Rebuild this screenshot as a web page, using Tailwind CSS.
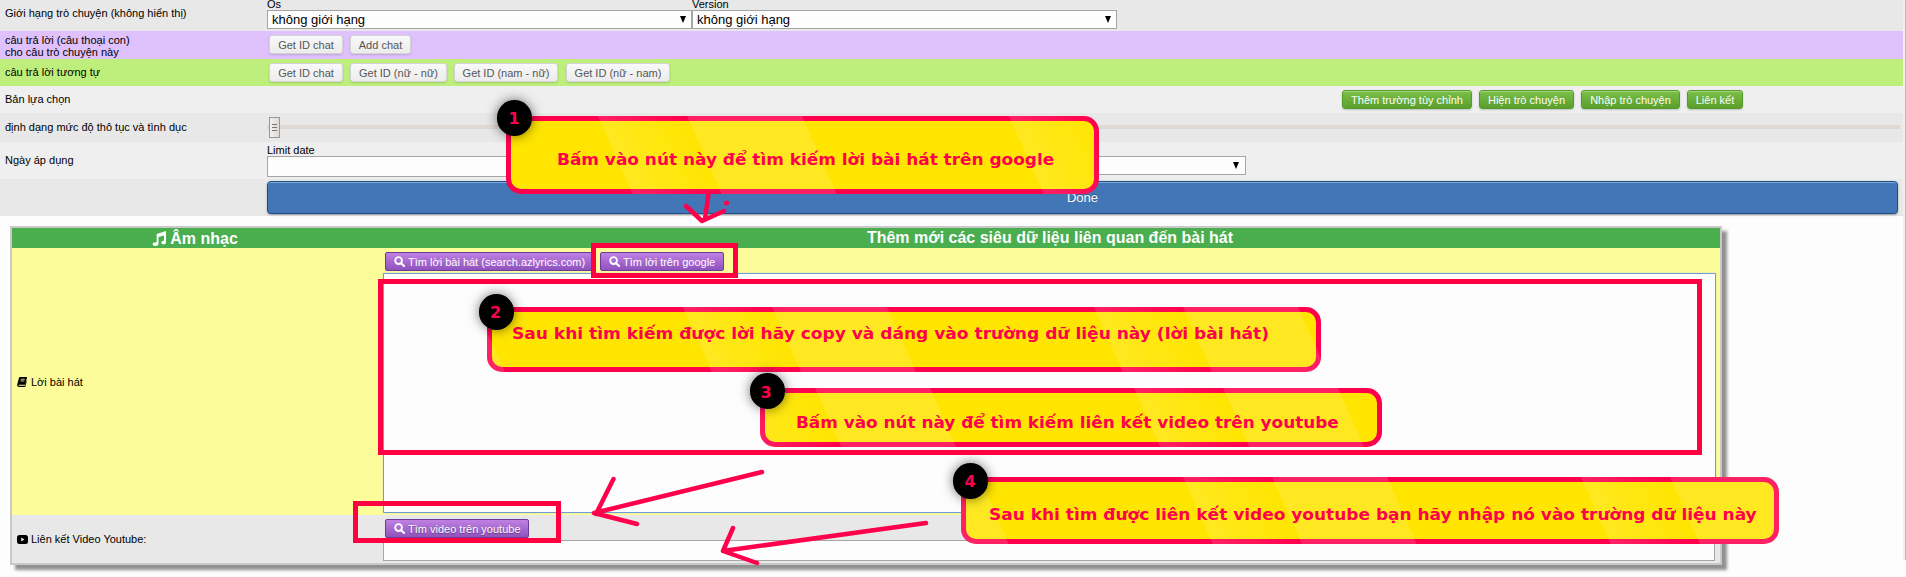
<!DOCTYPE html>
<html lang="vi">
<head>
<meta charset="utf-8">
<title>Âm nhạc</title>
<script src="https://cdn.jsdelivr.net/npm/@tailwindcss/browser@4"></script>
</head>
<body class="relative h-[577px] w-[1906px] overflow-hidden bg-[#fdfdfd] font-['Liberation_Sans',Arial,sans-serif] text-[11px] leading-[12px] text-black">
<svg class="absolute h-0 w-0">
  <defs>
    <symbol id="search" viewBox="0 0 12 12"><circle cx="5" cy="5" r="3.7" fill="none" stroke="currentColor" stroke-width="2"/><path d="M7.8 7.8 11 11" stroke="currentColor" stroke-width="2.3" stroke-linecap="round"/></symbol>
    <linearGradient id="fade"><stop offset="0" stop-color="#fff" stop-opacity=".13"/><stop offset="1" stop-color="#fff" stop-opacity="0"/></linearGradient>
    <g id="gloss"><g transform="skewX(24)"><rect x="0" width="89" height="90" fill="url(#fade)"/><rect x="89" width="115" height="90" fill="#fff" fill-opacity=".13"/></g></g>
  </defs>
</svg>

<main class="w-[1903px]">
  <div class="flex h-[31px] bg-[#e8e8e8]">
    <div class="w-[267px] pt-[7px] pl-[5px]">Giới hạng trò chuyện (không hiển thị)</div>
    <div class="w-[425px]">
      <div class="-mt-[2px] h-3">Os</div>
      <div class="flex h-[19px] items-center justify-between border border-[#a6a6a6] bg-[#fdfdfd] pr-[5px] pl-1 text-[13px] leading-[17px]"><span>không giới hạng</span><span class="h-0 w-0 border-x-[3.5px] border-t-[7px] border-x-transparent border-t-black"></span></div>
    </div>
    <div class="w-[425px]">
      <div class="-mt-[2px] h-3">Version</div>
      <div class="flex h-[19px] items-center justify-between border border-[#a6a6a6] bg-[#fdfdfd] pr-[5px] pl-1 text-[13px] leading-[17px]"><span>không giới hạng</span><span class="h-0 w-0 border-x-[3.5px] border-t-[7px] border-x-transparent border-t-black"></span></div>
    </div>
  </div>

  <div class="flex h-[28px] bg-[#dec1fd]">
    <div class="w-[269px] pt-[3px] pl-[5px]">câu trả lời (câu thoại con)<br>cho câu trò chuyện này</div>
    <div class="flex gap-[7px] pt-1 text-[#555]">
      <button class="h-[19px] w-[74px] rounded-[3px] border border-[#d4d4d4] bg-linear-to-b from-[#f9f9f9] to-[#ececec] shadow-[0_1px_2px_rgba(0,0,0,.15)]">Get ID chat</button>
      <button class="h-[19px] w-[61px] rounded-[3px] border border-[#d4d4d4] bg-linear-to-b from-[#f9f9f9] to-[#ececec] shadow-[0_1px_2px_rgba(0,0,0,.15)]">Add chat</button>
    </div>
  </div>

  <div class="flex h-[27px] bg-[#beef7c]">
    <div class="w-[269px] pt-[7px] pl-[5px]">câu trả lời tương tự</div>
    <div class="flex gap-[7px] pt-1 text-[#555]">
      <button class="h-[19px] w-[74px] rounded-[3px] border border-[#d4d4d4] bg-linear-to-b from-[#f9f9f9] to-[#ececec] shadow-[0_1px_2px_rgba(0,0,0,.15)]">Get ID chat</button>
      <button class="h-[19px] w-[97px] rounded-[3px] border border-[#d4d4d4] bg-linear-to-b from-[#f9f9f9] to-[#ececec] shadow-[0_1px_2px_rgba(0,0,0,.15)]">Get ID (nữ - nữ)</button>
      <button class="h-[19px] w-[104px] rounded-[3px] border border-[#d4d4d4] bg-linear-to-b from-[#f9f9f9] to-[#ececec] shadow-[0_1px_2px_rgba(0,0,0,.15)]">Get ID (nam - nữ)</button>
      <button class="ml-px h-[19px] w-[104px] rounded-[3px] border border-[#d4d4d4] bg-linear-to-b from-[#f9f9f9] to-[#ececec] shadow-[0_1px_2px_rgba(0,0,0,.15)]">Get ID (nữ - nam)</button>
    </div>
  </div>

  <div class="flex h-[27px] bg-[#efefef]">
    <div class="w-[1342px] pt-[7px] pl-[5px]">Bản lựa chọn</div>
    <div class="flex gap-[7px] pt-1 text-[#fdfdfd] [text-shadow:0_1px_1px_rgba(0,0,0,.3)]">
      <button class="h-[19px] w-[130px] rounded-[3px] border border-[#549b27] bg-linear-to-b from-[#7cc04b] to-[#5a9f2b] shadow-[inset_0_1px_0_#a2d67c,0_1px_2px_rgba(0,0,0,.2)]">Thêm trường tùy chỉnh</button>
      <button class="h-[19px] w-[95px] rounded-[3px] border border-[#549b27] bg-linear-to-b from-[#7cc04b] to-[#5a9f2b] shadow-[inset_0_1px_0_#a2d67c,0_1px_2px_rgba(0,0,0,.2)]">Hiện trò chuyện</button>
      <button class="h-[19px] w-[99px] rounded-[3px] border border-[#549b27] bg-linear-to-b from-[#7cc04b] to-[#5a9f2b] shadow-[inset_0_1px_0_#a2d67c,0_1px_2px_rgba(0,0,0,.2)]">Nhập trò chuyện</button>
      <button class="h-[19px] w-[56px] rounded-[3px] border border-[#549b27] bg-linear-to-b from-[#7cc04b] to-[#5a9f2b] shadow-[inset_0_1px_0_#a2d67c,0_1px_2px_rgba(0,0,0,.2)]">Liên kết</button>
    </div>
  </div>

  <div class="flex h-[29px] bg-[#e8e8e8]">
    <div class="w-[267px] pt-2 pl-[5px]">định dạng mức độ thô tục và tình dục</div>
    <div class="mt-3 h-1 w-[1633px] bg-[#dedad3]">
      <div class="-mt-2 ml-[2px] flex h-[21px] w-[11px] flex-col items-center justify-center gap-[2px] border border-[#9c9794] bg-linear-to-r from-[#f3f0ee] to-[#dcd8d6]">
        <i class="h-px w-[5px] bg-[#777]"></i><i class="h-px w-[5px] bg-[#777]"></i><i class="h-px w-[5px] bg-[#777]"></i>
      </div>
    </div>
  </div>

  <div class="flex h-[37px] bg-[#efefef]">
    <div class="w-[267px] pt-[12px] pl-[5px]">Ngày áp dụng</div>
    <div class="w-[489px] pt-[2px]">
      <div class="h-3">Limit date</div>
      <div class="h-[21px] border border-[#a6a6a6] bg-[#fdfdfd]"></div>
    </div>
    <div class="w-[490px] pt-[14px]">
      <div class="flex h-[19px] items-center justify-end border border-[#a6a6a6] bg-[#fdfdfd] pr-[6px]"><span class="h-0 w-0 border-x-[3.5px] border-t-[7px] border-x-transparent border-t-black"></span></div>
    </div>
  </div>

  <div class="h-[37px] bg-[#e8e8e8] pt-[2px] pl-[267px]">
    <button class="block h-[33px] w-[1631px] rounded-[4px] border border-[#1b4f8d] bg-[#4276b6] text-[13px] text-[#fdfdfd] shadow-[inset_0_1px_0_#82a8d6,0_1px_2px_rgba(0,0,0,.35)] [text-shadow:0_-1px_0_rgba(0,0,0,.3)]">Done</button>
  </div>

  <section class="mt-[10px] ml-[10px] h-[339px] w-[1712px] border-2 border-[#c9c9c9] bg-[#e8e8e8] shadow-[5px_5px_3px_#909090]">
    <div class="flex h-5 bg-[#4aad4e] text-center text-[16px] leading-[19px] font-bold text-[#fdfdfd]">
      <div class="flex w-[366px] items-center justify-center gap-1">
        <svg class="h-[15px] w-[14px]" viewBox="0 0 15 16" fill="currentColor"><path d="M5 3.200 15 0v12.200c0 1.300-1.200 2-2.600 2s-2.500-.8-2.500-1.900 1.200-2 2.900-1.900V4.700L7 6.500v7.100C7 15.200 5.200 16 3.500 16 1.700 16 .6 15.200.6 14.100s1.400-2.200 4.400-2Z"/></svg>
        <span>Âm nhạc</span>
      </div>
      <div class="w-[1342px] pl-[2px]">Thêm mới các siêu dữ liệu liên quan đến bài hát</div>
    </div>
    <div class="flex h-[267px] bg-[#fdfc9b]">
      <div class="flex w-[371px] items-center gap-1 pl-[5px]">
        <svg class="h-[10px] w-[10px]" viewBox="0 0 10 10"><path d="M3 0h6.500q.7.3.4 1L8.200 7.200q-.2.6-.9.600H2q-.7.200-.2.900H8l1.300-5 .4.700L8.500 9.200q-.2.800-1 .8H1.800Q-.2 9.600.2 7.800L2 .8Q2.300 0 3 0Z"/><path d="M3.800 2.300h4M3.400 4h4" stroke="#fdfc9b" stroke-width=".8"/></svg>
        <span>Lời bài hát</span>
      </div>
      <div class="w-[1333px] pt-1">
        <div class="flex gap-[7px] pl-[2px] text-[#fdfdfd] [text-shadow:0_1px_1px_rgba(0,0,0,.4)]">
          <button class="flex h-[19px] w-[208px] items-center gap-[3px] rounded-[2px] border border-[#6d3a9c] bg-linear-to-b from-[#c080e3] to-[#8f53bd] pl-2 whitespace-nowrap"><svg class="h-[11px] w-[11px] shrink-0"><use href="#search"/></svg>Tìm lời bài hát (search.azlyrics.com)</button>
          <button class="flex h-[19px] w-[124px] items-center gap-[3px] rounded-[2px] border border-[#6d3a9c] bg-linear-to-b from-[#c080e3] to-[#8f53bd] pl-2 whitespace-nowrap"><svg class="h-[11px] w-[11px] shrink-0"><use href="#search"/></svg>Tìm lời trên google</button>
        </div>
        <div class="mt-[2px] h-[240px] rounded-[1px] border border-[#6f9bd6] bg-[#fdfdfd] shadow-[0_0_1px_#7fa6da]"></div>
      </div>
    </div>
    <div class="flex h-[48px]">
      <div class="flex w-[371px] items-center gap-[3px] pl-[5px]">
        <svg class="h-[9px] w-[11px]" viewBox="0 0 11 9"><rect width="11" height="9" rx="2.500"/><path d="M4.200 2.500v4L7.500 4.500z" fill="#e8e8e8"/></svg>
        <span>Liên kết Video Youtube:</span>
      </div>
      <div class="w-[1332px] pt-1">
        <button class="ml-[2px] flex h-[19px] w-[144px] items-center gap-[3px] rounded-[2px] border border-[#6d3a9c] bg-linear-to-b from-[#c080e3] to-[#8f53bd] pl-2 whitespace-nowrap text-[#fdfdfd] [text-shadow:0_1px_1px_rgba(0,0,0,.4)]"><svg class="h-[11px] w-[11px] shrink-0"><use href="#search"/></svg>Tìm video trên youtube</button>
        <div class="mt-[2px] h-[21px] border border-[#a6a6a6] bg-[#fdfdfd]"></div>
      </div>
    </div>
  </section>
</main>

<!-- Page edge -->
<div class="absolute top-0 left-[1903px] h-[560px] w-[3px] border-r border-[#bdbdbd] bg-[#efefef]"></div>

<!-- Highlight frames -->
<div class="absolute top-[243px] left-[591px] h-[35px] w-[147px] border-[5px] border-[#ff0040]"></div>
<div class="absolute top-[279px] left-[378px] h-[176px] w-[1324px] border-[5px] border-[#ff0040]"></div>
<div class="absolute top-[501px] left-[353px] h-[42px] w-[208px] border-[5px] border-[#ff0040]"></div>

<!-- Arrows -->
<svg class="absolute top-0 left-0 h-[577px] w-[1906px]" fill="none" stroke="#ff004c" stroke-width="4.500" stroke-linecap="round" stroke-linejoin="round">
  <path d="M709 190 705 219M686 206 702 221 724 211M702 221 705 219"/><circle cx="726.500" cy="203" r="2.500" fill="#ff004c" stroke="none"/>
  <path d="M762 472 594 513M613.500 479 596 514M594 513 637 524"/>
  <path d="M926 523 723 551M733 528 723 551 757 563"/>
</svg>

<!-- Callouts -->
<div class="font-['DejaVu_Sans',sans-serif] text-[16px] leading-[20px] font-bold whitespace-nowrap text-[#ff004c]">
  <div class="absolute top-[116px] left-[506px] h-[78px] w-[593px] rounded-[15px] border-[5px] border-[#ff004c] bg-[#ffe500]"></div>
  <svg class="absolute top-[116px] left-[506px] h-[78px] w-[593px] rounded-[15px]"><use href="#gloss" x="92"/><use href="#gloss" x="503"/></svg>
  <div class="absolute top-[150px] left-[557px] origin-left scale-x-[1.058]">Bấm vào nút này để tìm kiếm lời bài hát trên google</div>
  <div class="absolute top-[100px] left-[497px] h-9 w-[35px] rounded-full bg-black pr-px text-center leading-[38px] shadow-[0_0_12px_rgba(0,0,0,.55)]">1</div>

  <div class="absolute top-[307px] left-[487px] h-[65px] w-[834px] rounded-[15px] border-[5px] border-[#ff004c] bg-[#ffe500]"></div>
  <svg class="absolute top-[307px] left-[487px] h-[65px] w-[834px] rounded-[15px]"><use href="#gloss" x="-215"/><use href="#gloss" x="196"/><use href="#gloss" x="607"/></svg>
  <div class="absolute top-[324px] left-[512px] origin-left scale-x-[1.065]">Sau khi tìm kiếm được lời hãy copy và dáng vào trường dữ liệu này (lời bài hát)</div>
  <div class="absolute top-[294px] left-[479px] h-9 w-[35px] rounded-full bg-black pr-[2px] text-center leading-[37px] shadow-[0_0_12px_rgba(0,0,0,.55)]">2</div>

  <div class="absolute top-[388px] left-[760px] h-[59px] w-[622px] rounded-[15px] border-[5px] border-[#ff004c] bg-[#ffe500]"></div>
  <svg class="absolute top-[388px] left-[760px] h-[59px] w-[622px] rounded-[15px]"><use href="#gloss" x="-34"/><use href="#gloss" x="374"/></svg>
  <div class="absolute top-[413px] left-[796px] origin-left scale-x-[1.054]">Bấm vào nút này để tìm kiếm liên kết video trên youtube</div>
  <div class="absolute top-[373px] left-[750px] h-9 w-[35px] rounded-full bg-black pr-[3px] text-center leading-[39px] shadow-[0_0_12px_rgba(0,0,0,.55)]">3</div>

  <div class="absolute top-[477px] left-[961px] h-[67px] w-[818px] rounded-[15px] border-[5px] border-[#ff004c] bg-[#ffe500]"></div>
  <svg class="absolute top-[477px] left-[961px] h-[67px] w-[818px] rounded-[15px]"><use href="#gloss" x="-186"/><use href="#gloss" x="222"/><use href="#gloss" x="620"/></svg>
  <div class="absolute top-[505px] left-[989px] origin-left scale-x-[1.061]">Sau khi tìm được liên kết video youtube bạn hãy nhập nó vào trường dữ liệu này</div>
  <div class="absolute top-[463px] left-[953px] h-9 w-[35px] rounded-full bg-black pr-px text-center leading-[37px] shadow-[0_0_12px_rgba(0,0,0,.55)]">4</div>
</div>
</body>
</html>
